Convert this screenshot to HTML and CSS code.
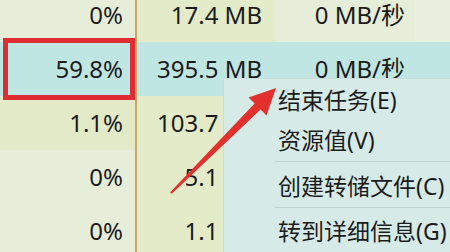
FILE: index.html
```html
<!DOCTYPE html>
<html lang="zh-CN">
<head>
<meta charset="utf-8">
<title>任务管理器</title>
<link rel="stylesheet" href="styles.css">
</head>
<body>
<div class="screen">
  <div class="table">
    <div class="row">
      <div class="cell c1">0%</div>
      <div class="cell c2">17.4 MB</div>
      <div class="cell c3">0 MB/秒</div>
      <div class="cell c4"></div>
    </div>
    <div class="row sel">
      <div class="cell c1">59.8%</div>
      <div class="cell c2">395.5 MB</div>
      <div class="cell c3">0 MB/秒</div>
      <div class="cell c4"></div>
    </div>
    <div class="row warm">
      <div class="cell c1">1.1%</div>
      <div class="cell c2">103.7 MB</div>
      <div class="cell c3"></div>
      <div class="cell c4"></div>
    </div>
    <div class="row">
      <div class="cell c1">0%</div>
      <div class="cell c2">5.1 MB</div>
      <div class="cell c3"></div>
      <div class="cell c4"></div>
    </div>
    <div class="row">
      <div class="cell c1">0%</div>
      <div class="cell c2">1.1 MB</div>
      <div class="cell c3"></div>
      <div class="cell c4"></div>
    </div>
  </div>

  <div class="menu">
    <div class="item item-first">结束任务(E)</div>
    <div class="item">资源值(V)</div>
    <div class="sep"></div>
    <div class="item">创建转储文件(C)</div>
    <div class="sep"></div>
    <div class="item">转到详细信息(G)</div>
  </div>

  <div class="mark"></div>

  <svg class="arrow" width="450" height="252" viewBox="0 0 450 252">
    <polygon points="276,88 266.5,115.5 260.6,109.4 171.8,193.8 170.2,192.2 254.6,103.4 248.5,97.5" fill="#e3302d"/>
  </svg>
</div>
</body>
</html>
```

FILE: styles.css
```css
html, body {
  margin: 0;
  padding: 0;
}

body {
  width: 450px;
  height: 252px;
  overflow: hidden;
  background: #e6eed8;
  font-family: "Noto Sans", "Noto Sans CJK SC", sans-serif;
  color: #1b1b1b;
}

.screen {
  position: relative;
  width: 450px;
  height: 252px;
  overflow: hidden;
}

.table {
  display: flex;
  flex-direction: column;
  margin-top: -12px;
}

.row {
  display: flex;
  height: 54px;
}

.cell {
  box-sizing: border-box;
  height: 54px;
  line-height: 54px;
  font-size: 24px;
  text-align: right;
  white-space: nowrap;
  overflow: hidden;
}

.c1 {
  width: 137px;
  padding-right: 12px;
  border-right: 2px solid #c9a56c;
  background: #e6eed9;
}

.c2 {
  width: 138px;
  padding-right: 13px;
  background: #e3ebc8;
}

.c3 {
  width: 140px;
  padding-right: 10px;
  background: #e6eed9;
}

.c4 {
  flex: 1;
  background: #e9f0de;
}

.row.warm .c1 {
  background: #e2eac7;
}

.row.sel .cell {
  background: #bfe6e2;
}

.menu {
  position: absolute;
  left: 223px;
  top: 78px;
  width: 260px;
  bottom: 0;
  box-sizing: border-box;
  background: #d6ebe8;
  border-left: 1px solid #c9dedb;
  border-top: 1px solid #c9dedb;
  display: flex;
  flex-direction: column;
}

.item {
  height: 42px;
  line-height: 42px;
  padding-left: 54px;
  font-size: 23px;
  white-space: nowrap;
  color: #1b1b1b;
}

.item-first {
  height: 40px;
}

.sep {
  height: 1px;
  margin: 0 0 3px 51px;
  background: #bfd3d0;
}

.mark {
  position: absolute;
  left: 3px;
  top: 38px;
  width: 132px;
  height: 62px;
  box-sizing: border-box;
  border: 5px solid #e02d33;
}

.arrow {
  position: absolute;
  left: 0;
  top: 0;
}
```
